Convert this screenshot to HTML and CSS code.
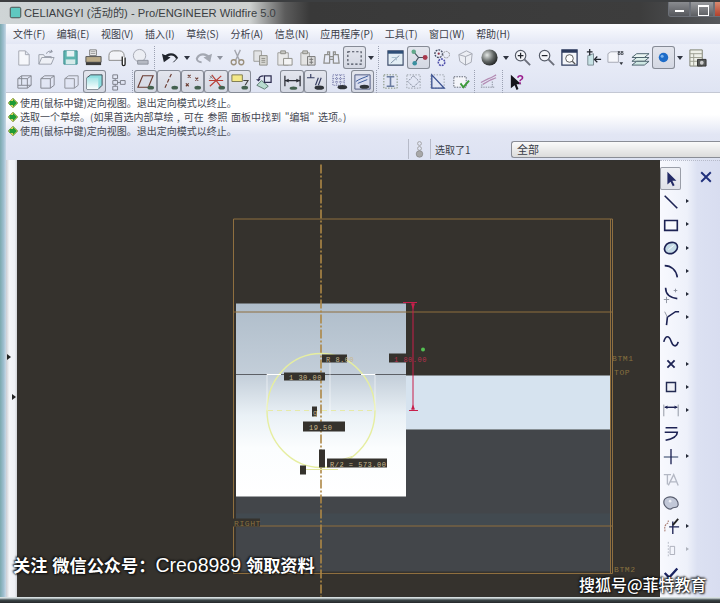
FILE: index.html
```html
<!DOCTYPE html>
<html lang="zh">
<head>
<meta charset="utf-8">
<title>CELIANGYI - Pro/ENGINEER Wildfire 5.0</title>
<link rel="stylesheet" href="styles.css">
</head>
<body>
<svg class="defs" aria-hidden="true">
  <symbol id="new" viewBox="0 0 20 20"><path d="M5 3h7l4 4v11H5zM12 3v4h4" fill="#f6f7fb" stroke="#a4a8b2"/></symbol>
  <symbol id="open" viewBox="0 0 20 20"><path d="M2 17V7h5l1 2h7v2M2 17l3-7h13l-3 7z" fill="#eef0f6" stroke="#9a9fab"/><path d="M10 6c1-3 4-3 6-2l-1-2M16 4l-3 1" fill="none" stroke="#8a8f9c"/></symbol>
  <symbol id="save" viewBox="0 0 20 20"><path d="M3 3h14v14H3z" fill="#5fb5b0" stroke="#3f8c90"/><path d="M6 3h8v6H6z" fill="#e8f2f4"/><path d="M5 12h10v5H5z" fill="#d5eaea"/></symbol>
  <symbol id="print" viewBox="0 0 20 20"><path d="M6 2h7v6H6z" fill="#fff" stroke="#777"/><path d="M2 9h16v6H2z" fill="#b9a987" stroke="#555"/><path d="M2 15h16v3H2z" fill="#3b3b3b"/><path d="M7 4h5M7 6h5" stroke="#888"/></symbol>
  <symbol id="mail" viewBox="0 0 20 20"><path d="M1 8c0-3 2-5 5-5h6c3 0 5 2 5 5v5H1z" fill="#f2f3f7" stroke="#888"/><path d="M15 9v8c0 2 3 2 3 0v-7" fill="#fff" stroke="#222" stroke-width="1.4"/></symbol>
  <symbol id="mail2" viewBox="0 0 20 20"><circle cx="9" cy="8" r="6.5" fill="#eceef4" stroke="#a4a8b2"/><path d="M7 13h11v4H7z" fill="#b6bac4" stroke="#8c909c"/></symbol>
  <symbol id="undo" viewBox="0 0 20 20"><path d="M4 10c3-4 10-5 13 1" fill="none" stroke="#20242c" stroke-width="2.4"/><path d="M1 6l2 9 7-5z" fill="#20242c"/><path d="M13 15l4-4" stroke="#20242c"/></symbol>
  <symbol id="redo" viewBox="0 0 20 20"><path d="M16 10c-3-4-10-5-13 1 0 2 2 4 5 4" fill="none" stroke="#a4a8b2" stroke-width="2.2"/><path d="M19 6l-2 9-7-5z" fill="#a4a8b2"/></symbol>
  <symbol id="cut" viewBox="0 0 20 20"><path d="M7 2l5 11M13 2L8 13" stroke="#a4a6ae" fill="none" stroke-width="1.4"/><circle cx="6" cy="15" r="2.6" fill="none" stroke="#9a8f7c" stroke-width="1.4"/><circle cx="14" cy="15" r="2.6" fill="none" stroke="#9a8f7c" stroke-width="1.4"/></symbol>
  <symbol id="copy" viewBox="0 0 20 20"><path d="M3 3h8v11H3z" fill="#e3e4e6" stroke="#9c9c9a"/><path d="M9 8h8v10H9z" fill="#d8d8d4" stroke="#8e8e88"/><path d="M11 11h4M11 13h4M11 15h4" stroke="#8e8e88"/></symbol>
  <symbol id="paste" viewBox="0 0 20 20"><path d="M3 5h11v13H3z" fill="#eaeaea" stroke="#9c9c9a"/><path d="M6 3h5v3H6z" fill="#c8c8c4" stroke="#8e8e88"/><path d="M9 11h9v7H9z" fill="#f4f4f4" stroke="#8e8e88"/></symbol>
  <symbol id="pastes" viewBox="0 0 20 20"><path d="M3 5h9v13H3z" fill="#e4e4e4" stroke="#9c9c9a"/><path d="M5 3h5v3H5z" fill="#c8c8c4" stroke="#8e8e88"/><path d="M10 9h8v9h-8z" fill="#dcdcdc" stroke="#777"/><path d="M12 12h4M12 15h4M14 10v7" stroke="#777"/></symbol>
  <symbol id="find" viewBox="0 0 20 20"><path d="M3 7h5v9H2zM12 7h5l1 9h-6zM6 4h2v3H6zM12 4h2v3h-2zM8 9h4v3H8z" fill="none" stroke="#8f8f8c" stroke-width="1.3"/></symbol>
  <symbol id="selbox" viewBox="0 0 20 20"><path d="M3 4h14v13H3z" fill="none" stroke="#444a58" stroke-dasharray="2.4 2" stroke-width="1.2"/></symbol>
  <symbol id="viewp" viewBox="0 0 20 20"><path d="M2 3h16v15H2z" fill="#e3eef5" stroke="#3b4a68" stroke-width="1.2"/><path d="M2 3h16v3H2z" fill="#2e4f78"/><path d="M5 16l9-8" stroke="#7d8fa5"/><path d="M6 10h5v3" fill="none" stroke="#a7c0cf"/></symbol>
  <symbol id="tree" viewBox="0 0 20 20"><path d="M5 4l5 6-4 6M10 10h7" fill="none" stroke="#46505c" stroke-width="1.2"/><circle cx="5" cy="4" r="2.4" fill="#62a88a"/><circle cx="17" cy="10" r="2.6" fill="#a8384c"/><circle cx="6" cy="16" r="2.4" fill="#3a8fa0"/></symbol>
  <symbol id="gears" viewBox="0 0 20 20"><circle cx="6" cy="6" r="4" fill="none" stroke="#41495f" stroke-width="1.4" stroke-dasharray="2 1"/><circle cx="14" cy="7" r="3.4" fill="none" stroke="#8e8e8e" stroke-dasharray="2 1"/><circle cx="9" cy="15" r="3.4" fill="none" stroke="#4a4aa8" stroke-width="1.6" stroke-dasharray="2 1"/><circle cx="6" cy="6" r="1.2" fill="#8a2e40"/></symbol>
  <symbol id="cube3" viewBox="0 0 20 20"><path d="M3 7l8-4 6 3-1 9-6 3-6-4zM10 9l7-3M10 9v9M10 9L3 7" fill="#eceef4" stroke="#a4a8b2"/></symbol>
  <symbol id="sphere" viewBox="0 0 20 20"><defs><radialGradient id="sg" cx=".35" cy=".35" r=".75"><stop offset="0" stop-color="#e4e8e6"/><stop offset=".55" stop-color="#5f6463"/><stop offset="1" stop-color="#17191a"/></radialGradient></defs><circle cx="10" cy="10" r="8.5" fill="url(#sg)"/></symbol>
  <symbol id="zin" viewBox="0 0 20 20"><circle cx="8" cy="8" r="5.5" fill="#f4f5f9" stroke="#555b68" stroke-width="1.2"/><path d="M5 8h6M8 5v6" stroke="#20242c" stroke-width="1.3"/><path d="M12 12l6 6" stroke="#6b6f7a" stroke-width="2"/></symbol>
  <symbol id="zout" viewBox="0 0 20 20"><circle cx="8" cy="8" r="5.5" fill="#f4f5f9" stroke="#555b68" stroke-width="1.2"/><path d="M5 8h6" stroke="#20242c" stroke-width="1.3"/><path d="M12 12l6 6" stroke="#6b6f7a" stroke-width="2"/></symbol>
  <symbol id="zfit" viewBox="0 0 20 20"><path d="M2 2h16v16H2z" fill="#f4f6fa" stroke="#2c3a5c" stroke-width="1.3"/><path d="M2 2h16v3H2z" fill="#2c3a5c"/><circle cx="10" cy="11" r="4" fill="#fff" stroke="#555"/><path d="M13 14l3 3" stroke="#555" stroke-width="1.4"/></symbol>
  <symbol id="orient" viewBox="0 0 20 20"><path d="M4 8l6-2v12H4z" fill="#c8e3e6" stroke="#7a8a92"/><path d="M6 1v7M3 4h6" stroke="#20242c" stroke-width="1.3"/><path d="M18 12h-6M14 9l-3 3 3 3" fill="none" stroke="#20242c" stroke-width="1.3"/></symbol>
  <symbol id="saved" viewBox="0 0 20 20"><path d="M1 6l3-2h8v11H1z" fill="#f6f7fb" stroke="#a4a8b2"/><path d="M13 15l2 3 2-3z" fill="#30343c"/></symbol>
  <symbol id="layers" viewBox="0 0 20 20"><path d="M1 14l5-4h13l-5 4z" fill="#dff0ec" stroke="#49606a"/><path d="M1 10l5-4h13l-5 4z" fill="#e9f4f2" stroke="#49606a"/><path d="M1 18l5-4h13l-5 4z" fill="#cfe8e4" stroke="#49606a"/></symbol>
  <symbol id="dot" viewBox="0 0 20 20"><circle cx="10" cy="10" r="5" fill="#1e6cc8"/><circle cx="8.6" cy="8.6" r="1.6" fill="#7fb6ee"/></symbol>
  <symbol id="table" viewBox="0 0 20 20"><path d="M2 2h13v17H2z" fill="#eef0e8" stroke="#7c7e70"/><path d="M2 6h13M2 10h13M2 14h13M6 6v13" stroke="#9c9e90"/><path d="M10 12h9v7h-9z" fill="#5a5c5a" stroke="#333"/><circle cx="14.5" cy="15.5" r="2" fill="#ccc"/></symbol>
  <symbol id="wire" viewBox="0 0 20 20"><path d="M3 7l4-3h10v10l-4 3H3zM3 7h10v10M13 7l4-3M7 4v10H3M7 14h10" fill="none" stroke="#83868f"/></symbol>
  <symbol id="hid" viewBox="0 0 20 20"><path d="M3 7l4-3h10v10l-4 3H3zM3 7h10v10M13 7l4-3" fill="none" stroke="#83868f"/></symbol>
  <symbol id="hid2" viewBox="0 0 20 20"><path d="M3 7l4-3h10v10l-4 3H3zM3 7h10v10" fill="none" stroke="#8e919a"/></symbol>
  <symbol id="shade" viewBox="0 0 20 20"><defs><linearGradient id="shg" x1="0" y1="0" x2="0" y2="1"><stop offset="0" stop-color="#a6e4e6"/><stop offset="1" stop-color="#fafefe"/></linearGradient></defs><path d="M2 6l4-3h12v11l-4 4H2z" fill="#8edee0" stroke="#3d4b55"/><path d="M2 6h12v12H2z" fill="url(#shg)"/></symbol>
  <symbol id="chain" viewBox="0 0 20 20"><path d="M4 3h5v4H4zM4 9h5v4H4zM4 15h5v4H4zM12 9h5v4h-5zM6.5 7v2M6.5 13v2M9 11h3" fill="none" stroke="#7a7d88"/></symbol>
  <symbol id="plane" viewBox="0 0 20 20"><path d="M7 4h11l-5 12H2z" fill="#d9dce6" stroke="#6a3b30" stroke-width="1.2"/><ellipse cx="15.5" cy="16.5" rx="3.5" ry="2" fill="#44614f"/></symbol>
  <symbol id="axis" viewBox="0 0 20 20"><path d="M12 2l-7 15" stroke="#6a3b30" stroke-dasharray="4 2" stroke-width="1.2"/><ellipse cx="15.5" cy="16.5" rx="3.5" ry="2" fill="#44614f"/></symbol>
  <symbol id="pts" viewBox="0 0 20 20"><path d="M5 3l3 3M8 3L5 6M13 6l3 3M16 6l-3 3M3 12l3 3M6 12l-3 3" stroke="#6a3b30" stroke-width="1.2"/><ellipse cx="15.5" cy="16.5" rx="3.5" ry="2" fill="#44614f"/></symbol>
  <symbol id="csys" viewBox="0 0 20 20"><path d="M3 15L15 4M5 3l10 13M2 9h15" stroke="#b83c34" stroke-width="1.2"/><path d="M3 4l3 3M6 4L3 7" stroke="#7f7f84"/><ellipse cx="15.5" cy="16.5" rx="3.5" ry="2" fill="#44614f"/></symbol>
  <symbol id="note" viewBox="0 0 20 20"><path d="M2 3h11v7H2z" fill="#f3e887" stroke="#7d7a50"/><path d="M14 9h5l-3 5" fill="none" stroke="#444" stroke-width="1.2"/><ellipse cx="15.5" cy="16.5" rx="3.5" ry="2" fill="#44614f"/></symbol>
  <symbol id="refit" viewBox="0 0 20 20"><path d="M3 14l5-5 7 6-4 3z" fill="#b8dcd0" stroke="#5c7a70"/><path d="M11 4h7v7h-7zM5 8c0-3 2-4 5-4" fill="none" stroke="#2e2e50" stroke-width="1.3"/><path d="M2 8l3 2 2-3z" fill="#2e2e50"/></symbol>
  <symbol id="dimw" viewBox="0 0 20 20"><path d="M2 4v11M18 4v11M2 9h16" fill="none" stroke="#2a2c34" stroke-width="1.3"/><path d="M2 9l4-2v4zM18 9l-4-2v4z" fill="#2a2c34"/><ellipse cx="11" cy="17" rx="4" ry="1.8" fill="#44614f"/></symbol>
  <symbol id="perp" viewBox="0 0 20 20"><path d="M1 6h8M5 2v4M13 6l-3 8M16 6l-3 8" fill="none" stroke="#353c60" stroke-width="1.2"/><ellipse cx="14" cy="16.5" rx="5" ry="2.2" fill="#30343a"/></symbol>
  <symbol id="grid" viewBox="0 0 20 20"><path d="M3 3h12v11H3zM7 3v11M11 3v11M3 7h12M3 10.5h12" fill="none" stroke="#7478a8" stroke-dasharray="1.2 1"/><ellipse cx="13" cy="16" rx="5" ry="2.2" fill="#30343a"/></symbol>
  <symbol id="pen" viewBox="0 0 20 20"><path d="M2 3h16v15H2z" fill="#d8dcee" stroke="#4e5a80"/><path d="M3 10c4-3 9-4 13-6M5 12l10-4" stroke="#3a5a9a" fill="none"/><ellipse cx="12" cy="15.5" rx="5" ry="2.2" fill="#30343a"/></symbol>
  <symbol id="ibeam" viewBox="0 0 20 20"><path d="M3 3h14v14H3z" fill="none" stroke="#7a8a70" stroke-dasharray="1.5 1.5"/><path d="M6 5h8M6 15h8M10 5v10" stroke="#6a7ca0" stroke-width="1.7"/></symbol>
  <symbol id="oct" viewBox="0 0 20 20"><path d="M3 3h14v14H3z" fill="none" stroke="#9aa0a8" stroke-dasharray="1.5 1.5"/><path d="M10 4l6 6-6 6-6-6z" fill="none" stroke="#6f7688" stroke-dasharray="1.5 1"/></symbol>
  <symbol id="tri" viewBox="0 0 20 20"><path d="M3 3h14v14H3z" fill="none" stroke="#9aa0a8" stroke-dasharray="1.5 1.5"/><path d="M4 3l13 14H4z" fill="none" stroke="#3a5090" stroke-width="1.4"/></symbol>
  <symbol id="okbox" viewBox="0 0 20 20"><path d="M3 5h13v11H3z" fill="#f4f5fa" stroke="#5a5f6c" stroke-dasharray="1.5 1.2"/><path d="M10 12l3 4 6-7" fill="none" stroke="#3b9a3a" stroke-width="2"/></symbol>
  <symbol id="model" viewBox="0 0 20 20"><path d="M2 11l8-4c3-1 6-3 8-4M4 13l7-4c2-1 5-2 7-3" fill="none" stroke="#b48cb4" stroke-width="1.3"/><path d="M2 16h15M3 13v3M14 10v6" stroke="#8a8f9c" stroke-dasharray="1.5 1"/></symbol>
  <symbol id="help" viewBox="0 0 20 20"><path d="M3 3v14l4-3 2 5 2-1-2-5h5z" fill="#15151b"/></symbol>
  <symbol id="arrow" viewBox="0 0 20 20"><path d="M6 2v14l3.500-3 2.500 5 2-1-2.500-5h4.500z" fill="#242b66"/></symbol>
  <symbol id="line" viewBox="0 0 20 20"><path d="M3 3l14 14" stroke="#1d2354" stroke-width="1.8"/></symbol>
  <symbol id="rect" viewBox="0 0 20 20"><path d="M3 5h14v11H3z" fill="#fff" fill-opacity=".4" stroke="#1d2354" stroke-width="1.8"/></symbol>
  <symbol id="ell" viewBox="0 0 20 20"><ellipse cx="10" cy="10" rx="7.5" ry="6" transform="rotate(-25 10 10)" fill="#c5dbe6" stroke="#1d2354" stroke-width="1.8"/><path d="M7 12l6-5" stroke="#fff"/></symbol>
  <symbol id="arc" viewBox="0 0 20 20"><path d="M3 4c7 0 13 5 14 13" fill="none" stroke="#1d2354" stroke-width="1.8"/></symbol>
  <symbol id="fil" viewBox="0 0 20 20"><path d="M4 2c0 7 4 11 13 12" fill="none" stroke="#1d2354" stroke-width="1.8"/><path d="M15 3v4M13 5h4M2 15h6M5 12v7" stroke="#8a8f9c"/></symbol>
  <symbol id="cham" viewBox="0 0 20 20"><path d="M5 18L6 9l9-6h4" fill="none" stroke="#1d2354" stroke-width="1.8"/><path d="M6 9L3 3" stroke="#8a8f9c"/></symbol>
  <symbol id="spl" viewBox="0 0 20 20"><path d="M2 11c2-8 6-7 8-1s6 8 8 1" fill="none" stroke="#1d2354" stroke-width="1.8"/></symbol>
  <symbol id="xm" viewBox="0 0 20 20"><path d="M6 6l8 8M14 6l-8 8" stroke="#1d2354" stroke-width="2"/></symbol>
  <symbol id="xbig" viewBox="0 0 20 20"><path d="M4 4l12 12M16 4L4 16" stroke="#20307c" stroke-width="2.4"/></symbol>
  <symbol id="sq" viewBox="0 0 20 20"><path d="M5 5h10v10H5z" fill="#eef0f6" stroke="#222a52" stroke-width="1.6"/></symbol>
  <symbol id="hdim" viewBox="0 0 20 20"><path d="M2 4v13M18 4v13" stroke="#8a8f9c"/><path d="M3 7h14" stroke="#1d2354" stroke-width="1.6"/><path d="M3 7l3-2v4zM17 7l-3-2v4z" fill="#1d2354"/></symbol>
  <symbol id="cons" viewBox="0 0 20 20"><path d="M4 3h13M3 8h14c0 4-4 7-13 9" fill="none" stroke="#1d2354" stroke-width="1.8"/></symbol>
  <symbol id="plus" viewBox="0 0 20 20"><path d="M2 10h16" stroke="#5c6a88" stroke-width="1.5"/><path d="M10 1v17" stroke="#1d2354" stroke-width="1.5"/></symbol>
  <symbol id="ta" viewBox="0 0 20 20"><path d="M2 4h8M6 4v11M7 16L13 4l5 12M9 12h7" fill="none" stroke="#b4b8c4" stroke-width="1.5"/></symbol>
  <symbol id="pal" viewBox="0 0 20 20"><path d="M2 9c0-5 6-7 11-5s6 8 4 10-4 0-6 2-9-1-9-7z" fill="#c2c8d8" stroke="#5a5f70" stroke-width="1.3"/><circle cx="9" cy="8" r="1.5" fill="#eef0f6"/></symbol>
  <symbol id="trim" viewBox="0 0 20 20"><path d="M3 16c1-3-1-4 1-7s3-1 3-5" fill="none" stroke="#a87a70" stroke-dasharray="2 1" stroke-width="1.2"/><path d="M8 11h11M12 5v14" stroke="#1d2354" stroke-width="1.5"/><path d="M18 2l-6 7" stroke="#222" stroke-width="2"/></symbol>
  <symbol id="cpy" viewBox="0 0 20 20"><path d="M7 1v17" stroke="#b4b8c4" stroke-dasharray="2 1.5"/><path d="M9 6h5v9H9z" fill="none" stroke="#a8acb8"/></symbol>
  <symbol id="ok" viewBox="0 0 20 20"><path d="M3 10l5 5 9-10" fill="none" stroke="#1a2260" stroke-width="2.6"/></symbol>
  <symbol id="msg" viewBox="0 0 20 20"><path d="M10 0l10 10-10 10L0 10z" fill="#d9d35a" stroke="#5f7a34"/><path d="M3 6h7V2l8 8-8 8v-4H3z" fill="#1f9a35"/></symbol>
  <symbol id="grip" viewBox="0 0 20 32"><circle cx="10" cy="6" r="3.5" fill="none" stroke="#9a9a9a" stroke-width="1.5"/><circle cx="10" cy="15" r="3.5" fill="none" stroke="#9a9a9a" stroke-width="1.5"/><circle cx="10" cy="25" r="6" fill="#a8a8a8" stroke="#777"/></symbol>
  <symbol id="logo" viewBox="0 0 20 20"><rect x="3" y="3" width="14" height="14" rx="2" fill="#5fc8c0" stroke="#444" stroke-width="1.2"/></symbol>
</svg>

<div class="window">
  <header class="titlebar">
    <svg class="logo"><use href="#logo"/></svg>
    <span class="title">CELIANGYI (活动的) - Pro/ENGINEER Wildfire 5.0</span>
    <div class="winbtns"><span class="wb min"></span><span class="wb max"></span><span class="wb close"></span></div>
  </header>

  <div class="shell">
    <div class="frame"></div>
    <div class="client">
      <nav class="menu">
        <span>文件(F)</span><span>编辑(E)</span><span>视图(V)</span><span>插入(I)</span><span>草绘(S)</span><span>分析(A)</span><span>信息(N)</span><span>应用程序(P)</span><span>工具(T)</span><span>窗口(W)</span><span>帮助(H)</span>
      </nav>

      <div class="toolbars">
        <div class="row row1">
          <span class="t"><svg><use href="#new"/></svg></span>
          <span class="t"><svg><use href="#open"/></svg></span>
          <span class="t"><svg><use href="#save"/></svg></span>
          <span class="t"><svg><use href="#print"/></svg></span>
          <span class="t"><svg><use href="#mail"/></svg></span>
          <span class="t"><svg><use href="#mail2"/></svg></span>
          <i class="sep s6"></i>
          <span class="t"><svg><use href="#undo"/></svg></span>
          <b class="drop"></b>
          <span class="t"><svg><use href="#redo"/></svg></span>
          <b class="drop muted"></b>
          <span class="t"><svg><use href="#cut"/></svg></span>
          <span class="t"><svg><use href="#copy"/></svg></span>
          <span class="t"><svg><use href="#paste"/></svg></span>
          <span class="t"><svg><use href="#pastes"/></svg></span>
          <span class="t"><svg><use href="#find"/></svg></span>
          <span class="t on"><svg><use href="#selbox"/></svg></span>
          <b class="drop"></b>
          <i class="sep s7"></i>
          <span class="t"><svg><use href="#viewp"/></svg></span>
          <span class="t on"><svg><use href="#tree"/></svg></span>
          <span class="t"><svg><use href="#gears"/></svg></span>
          <span class="t"><svg><use href="#cube3"/></svg></span>
          <span class="t"><svg><use href="#sphere"/></svg></span>
          <b class="drop"></b>
          <span class="t"><svg><use href="#zin"/></svg></span>
          <span class="t"><svg><use href="#zout"/></svg></span>
          <span class="t"><svg><use href="#zfit"/></svg></span>
          <span class="t"><svg><use href="#orient"/></svg></span>
          <span class="t"><svg viewBox="0 0 20 20"><use href="#saved" width="20" height="20"/><text x="11" y="7" class="mini">88</text></svg></span>
          <span class="t"><svg><use href="#layers"/></svg></span>
          <span class="t on"><svg><use href="#dot"/></svg></span>
          <b class="drop narrow"></b>
          <span class="t shift"><svg><use href="#table"/></svg></span>
        </div>
        <div class="row row2">
          <span class="t"><svg><use href="#wire"/></svg></span>
          <span class="t"><svg><use href="#hid"/></svg></span>
          <span class="t"><svg><use href="#hid2"/></svg></span>
          <span class="t on"><svg><use href="#shade"/></svg></span>
          <span class="t"><svg><use href="#chain"/></svg></span>
          <i class="sep s4"></i>
          <span class="t on"><svg><use href="#plane"/></svg></span>
          <span class="t on"><svg><use href="#axis"/></svg></span>
          <span class="t on"><svg><use href="#pts"/></svg></span>
          <span class="t on"><svg><use href="#csys"/></svg></span>
          <span class="t on"><svg><use href="#note"/></svg></span>
          <span class="t"><svg><use href="#refit"/></svg></span>
          <i class="gap55"></i>
          <span class="t on"><svg><use href="#dimw"/></svg></span>
          <span class="t on"><svg><use href="#perp"/></svg></span>
          <span class="t"><svg><use href="#grid"/></svg></span>
          <span class="t on"><svg><use href="#pen"/></svg></span>
          <i class="sep s4"></i>
          <span class="t"><svg><use href="#ibeam"/></svg></span>
          <span class="t"><svg><use href="#oct"/></svg></span>
          <span class="t"><svg><use href="#tri"/></svg></span>
          <span class="t"><svg><use href="#okbox"/></svg></span>
          <i class="sep s4"></i>
          <span class="t"><svg><use href="#model"/></svg></span>
          <i class="sep s6"></i>
          <span class="t"><svg viewBox="0 0 20 20"><use href="#help" width="20" height="20"/><text x="9" y="13" class="q">?</text></svg></span>
        </div>
      </div>

      <section class="messages">
        <p><svg><use href="#msg"/></svg>使用(鼠标中键)定向视图。退出定向模式以终止。</p>
        <p><svg><use href="#msg"/></svg>选取一个草绘。(如果首选内部草绘 , 可在 参照 面板中找到 "编辑" 选项。)</p>
        <p><svg><use href="#msg"/></svg>使用(鼠标中键)定向视图。退出定向模式以终止。</p>
        <div class="status">
          <span class="gripcell"><svg><use href="#grip"/></svg></span>
          <span class="selected">选取了1</span>
          <span class="combo">全部</span>
        </div>
      </section>

      <main class="workarea">
        <aside class="strip"><b class="nub"></b><b class="nub second"></b></aside>
        <svg class="canvas" viewBox="17 161 643 436">
          <defs>
            <linearGradient id="blk" x1="0" y1="0" x2="0" y2="1">
              <stop offset="0" stop-color="#afbdca"/>
              <stop offset=".37" stop-color="#c3ced9"/>
              <stop offset=".58" stop-color="#eaf1f6"/>
              <stop offset=".75" stop-color="#fbfdfe"/>
              <stop offset="1" stop-color="#ffffff"/>
            </linearGradient>
          </defs>
          <rect class="bg" x="17" y="161" width="643" height="436"/>
          <rect class="slab" x="236" y="430" width="375" height="142"/>
          <rect class="slab2" x="236" y="514" width="375" height="12"/>
          <rect class="band" x="406" y="376" width="205" height="54"/>
          <rect fill="url(#blk)" x="236" y="304" width="170" height="193"/>
          <path class="edge" d="M236 375H406"/>
          <path class="plane" d="M233.5 219.5H612.5V574H233.5ZM233.5 312.5H612.5M233.5 526.5H612.5M610.5 219.5V574"/>
          <path class="center" d="M321 165V597"/>
          <ellipse class="circ" cx="321" cy="411" rx="54" ry="57"/>
          <path class="circd" d="M268 411H374"/>
          <path class="wh" d="M267 374V411M375 374V411M330 355V415"/>
          <path class="whs" d="M267 375H281M361 375H375"/>
          <path class="circs" d="M306 470H338M330 357L347 362M332 463L352 457"/>
          <g class="lbls">
            <rect x="284" y="373" width="41" height="8"/><rect x="322" y="355" width="25" height="8"/>
            <rect x="303" y="422" width="42" height="10"/><rect x="319" y="450" width="6" height="18"/>
            <rect x="300" y="466" width="6" height="9"/><rect x="327" y="459" width="60" height="9"/>
            <rect x="312" y="407" width="5" height="10"/><rect x="389" y="354" width="30" height="9"/>
            <rect x="233" y="519" width="27" height="8"/>
          </g>
          <text class="dim" x="289" y="380">1 30.00</text>
          <text class="dim" x="326" y="362">R 8.00</text>
          <text class="dim" x="309" y="430">19.50</text>
          <text class="dim" x="330" y="467">R/2 = 573.00</text>
          <text class="dim" x="313" y="415">g</text>
          <path class="red" d="M403 303H417M413 303V411M409 411H418"/>
          <path class="redf" d="M411 304h4l-2 6zM411 410h4l-2-5z"/>
          <text class="dimr" x="394" y="362">1 80.00</text>
          <circle class="grn" cx="423" cy="350" r="2"/>
          <text class="pl" x="234" y="526">RIGHT</text>
          <text class="pl" x="612" y="361">BTM1</text>
          <text class="pl" x="614" y="375">TOP</text>
          <text class="pl" x="614" y="572">BTM2</text>
        </svg>
        <aside class="sidebar">
          <div class="stools">
            <span class="s on"><svg><use href="#arrow"/></svg></span>
            <span class="s more"><svg><use href="#line"/></svg></span>
            <span class="s more"><svg><use href="#rect"/></svg></span>
            <span class="s more"><svg><use href="#ell"/></svg></span>
            <span class="s more"><svg><use href="#arc"/></svg></span>
            <span class="s more"><svg><use href="#fil"/></svg></span>
            <span class="s more"><svg><use href="#cham"/></svg></span>
            <span class="s"><svg><use href="#spl"/></svg></span>
            <span class="s more"><svg><use href="#xm"/></svg></span>
            <span class="s more"><svg><use href="#sq"/></svg></span>
            <span class="s more"><svg><use href="#hdim"/></svg></span>
            <span class="s"><svg><use href="#cons"/></svg></span>
            <span class="s more"><svg><use href="#plus"/></svg></span>
            <span class="s"><svg><use href="#ta"/></svg></span>
            <span class="s"><svg><use href="#pal"/></svg></span>
            <span class="s more"><svg><use href="#trim"/></svg></span>
            <span class="s more dim2"><svg><use href="#cpy"/></svg></span>
            <span class="s"><svg><use href="#ok"/></svg></span>
          </div>
          <svg class="closex"><use href="#xbig"/></svg>
        </aside>
        <div class="wm wm1">关注 微信公众号：<span class="latin">Creo8989</span> 领取资料</div>
        <div class="wm wm2">搜狐号@菲特教育</div>
      </main>
    </div>
  </div>
  <footer class="bottom"></footer>
</div>
</body>
</html>
```
FILE: styles.css
```css
* { box-sizing: border-box; }
html, body { margin: 0; height: 100%; background: #333; }
body { font-family: "Noto Sans CJK SC", "Liberation Sans", sans-serif; color: #3a3d48; }
.defs { position: absolute; width: 0; height: 0; overflow: hidden; }
.mini { font: 700 6px "Liberation Sans", sans-serif; fill: #30343c; }
.q { font: 700 13px "Liberation Sans", sans-serif; fill: #9a1f8e; }

.window { width: 720px; height: 603px; display: flex; flex-direction: column; overflow: hidden; }

.titlebar {
  height: 24px; flex: none; display: flex; align-items: center; padding-left: 8px;
  background: linear-gradient(90deg, #cfd5d6 0, #c9ced0 68px, #cdd0cf 250px, #5c5c5c 285px, #393939 310px, #3d3d3d 640px, #56585c 720px);
  box-shadow: inset 0 2px 0 #3c3e40;
}
.logo { width: 15px; height: 15px; flex: none; }
.title { margin-left: 1px; font: 11.2px "Liberation Sans", "Noto Sans CJK SC", sans-serif; color: #3b3e42; white-space: nowrap; }
.winbtns { margin-left: auto; display: flex; align-self: flex-start; margin-top: 2px; margin-right: -12px; }
.wb { height: 15px; border: 1px solid #6c7078; border-top: 0; position: relative; }
.min { width: 22px; background: linear-gradient(#8a8c90, #55575c); border-radius: 0 0 0 3px; }
.max { width: 24px; background: linear-gradient(#9a9ca0, #5c5e62); }
.close { width: 18px; background: linear-gradient(#d88a70, #b2402c); }
.min::after { content: ""; position: absolute; left: 6px; bottom: 4px; width: 9px; height: 2px; background: #fff; }
.max::after { content: ""; position: absolute; left: 7px; top: 3px; width: 9px; height: 8px; border: 1px solid #fff; border-top-width: 2px; }

.shell { flex: 1; min-height: 0; display: flex; }
.frame { width: 6px; flex: none; background: linear-gradient(90deg, #7ba9ae 0, #9fbfd0 60%, #c8d8e6 100%); }
.client { flex: 1; min-width: 0; display: flex; flex-direction: column; }

.menu {
  height: 20px; flex: none; display: flex; align-items: center; gap: 11.5px; padding-left: 7px;
  font-size: 10px; line-height: 1; color: #3a3d48;
  background: linear-gradient(#fbfcff, #e3e7f5);
  white-space: nowrap;
}

.toolbars {
  height: 49px; flex: none; padding-top: 2px;
  background: linear-gradient(#eceff9, #dfe4f3);
  border-bottom: 1px solid #c4c8d4;
}
.row { height: 23px; display: flex; align-items: center; }
.row1 { padding-left: 5.25px; }
.row2 { padding-left: 6.25px; margin-top: 0.5px; }
.t { width: 23.5px; height: 23px; flex: none; display: flex; align-items: center; justify-content: center; border-radius: 3px; }
.t svg { width: 19px; height: 19px; display: block; overflow: visible; filter: blur(.3px); }
.t.on { background: linear-gradient(#e4e6ee, #d3d7e2); box-shadow: inset 0 0 0 1px #868b96; }
.shift { margin-left: 2px; }
.drop { width: 10px; height: 23px; flex: none; position: relative; }
.drop::after { content: ""; position: absolute; left: 2px; top: 10px; border: 3.5px solid transparent; border-top: 4px solid #2f3440; border-bottom: 0; }
.drop.muted::after { border-top-color: #8f939e; }
.drop.narrow { width: 8px; }
.sep { height: 23px; flex: none; position: relative; display: block; }
.sep::after { content: ""; position: absolute; left: 2px; top: 0; bottom: 0; border-left: 1px dotted #9ba1b2; }
.s4 { width: 4px; }
.s6 { width: 6px; }
.s7 { width: 7px; }
.gap55 { width: 5.5px; flex: none; }

.messages {
  height: 67px; flex: none; display: flex; flex-direction: column; padding-top: 3px;
  background: linear-gradient(#fff 0, #fff 32%, #e2e6f4 62%, #dde2f2 100%);
}
.messages p {
  margin: 0; height: 14px; display: flex; align-items: center; padding-left: 2px;
  font-size: 10px; line-height: 14px; color: #454852; white-space: pre; word-spacing: 1.5px;
}
.messages p svg { width: 10px; height: 10px; flex: none; margin-right: 2px; }
.status { margin-top: auto; height: 23px; display: flex; align-items: center; padding-left: 402px; }
.gripcell { width: 23px; height: 20px; display: flex; justify-content: center; align-items: center; border-left: 1px solid #b6bac8; border-right: 1px solid #b6bac8; flex: none; }
.gripcell svg { width: 11px; height: 18px; }
.selected { margin-left: 4px; width: 76px; font-size: 10px; flex: none; color: #3a3d48; }
.combo { flex: 1; height: 17px; margin-right: -2px; padding-left: 5px; border: 1px solid #8a8d96; border-right: 0; border-radius: 3px 0 0 3px; font-size: 11px; line-height: 15px; color: #3a3d48; background: linear-gradient(#fafafa, #dcdcdc); }

.workarea { flex: 1; min-height: 0; display: flex; position: relative; }
.strip { width: 11px; flex: none; position: relative; background: linear-gradient(90deg, #c9ccd2 0, #f4f5f8 30%, #eef0f4 80%, #d0d2d6 100%); }
.nub { position: absolute; left: 1px; top: 194px; border: 3px solid transparent; border-left: 4px solid #222; border-right: 0; }
.nub.second { left: 6px; top: 234px; }

.canvas { width: 643px; height: 437px; flex: none; display: block; }
.bg { fill: #35322d; }
.slab { fill: #43464a; }
.slab2 { fill: #424a50; }
.band { fill: #d6e3ef; }
.edge { stroke: #5d6066; fill: none; }
.plane { stroke: #8f6f3f; fill: none; }
.center { stroke: #ad8745; stroke-width: 1.6; stroke-dasharray: 9 2 2 2; fill: none; }
.circ { fill: none; stroke: #e6eea0; stroke-width: 1.4; }
.circd { stroke: #e6eaa8; stroke-dasharray: 5 4; fill: none; }
.wh { stroke: #ffffff; stroke-opacity: .55; fill: none; }
.whs { stroke: #ffffff; fill: none; }
.circs { stroke: #e2e6a0; fill: none; }
.lbls rect { fill: #35322d; }
.dim { font: 7px "Liberation Mono", monospace; fill: #c9b88e; letter-spacing: .5px; }
.dimr { font: 7px "Liberation Mono", monospace; fill: #b8304e; letter-spacing: .5px; }
.red { stroke: #c81f4b; fill: none; stroke-width: 1; }
.redf { fill: #c81f4b; }
.grn { fill: #54c052; }
.pl { font: 8px "Liberation Mono", monospace; fill: #87703f; letter-spacing: .6px; }

.sidebar { flex: 1; min-width: 0; display: flex; background: linear-gradient(90deg, #f8f9fe 0, #eef1fa 45%, #dce1f2 62%, #d8ddf0 100%); border-top: 1px dotted #b6bac8; }
.stools { width: 38px; flex: none; padding-top: 6px; display: flex; flex-direction: column; }
.s { height: 23.2px; flex: none; display: flex; align-items: center; padding-left: 2px; position: relative; }
.s svg { width: 18px; height: 18px; flex: none; filter: blur(.25px); }
.s.on { width: 21px; background: linear-gradient(#f0f1f5, #dfe1e8); box-shadow: inset 0 0 0 1px #9a9ea8; border-radius: 2px; }
.more::after { content: ""; position: absolute; left: 26px; top: 9px; border: 2.5px solid transparent; border-left: 3px solid #252a38; border-right: 0; }
.dim2::after { border-left-color: #aeb2bc; }
.closex { width: 16px; height: 16px; margin: 8px 0 0 0; flex: none; }

.wm { position: absolute; color: #fff; white-space: nowrap; text-shadow: 0 0 2px #111, 1px 1px 2px #111, -1px -1px 2px #111; font-family: "Noto Sans CJK SC", "Liberation Sans", sans-serif; font-weight: 700; }
.wm1 { left: 7px; top: 394px; font-size: 17.2px; line-height: 22px; word-spacing: 1px; }
.latin { font: 400 19.5px/22px "Liberation Sans", sans-serif; }
.wm2 { left: 573px; top: 416px; font-size: 16px; line-height: 16px; font-weight: 500; }

.bottom { height: 6px; flex: none; background: linear-gradient(#e4ecec 0, #c2ccce 20%, #3c4648 50%, #26282a 100%); }
```
